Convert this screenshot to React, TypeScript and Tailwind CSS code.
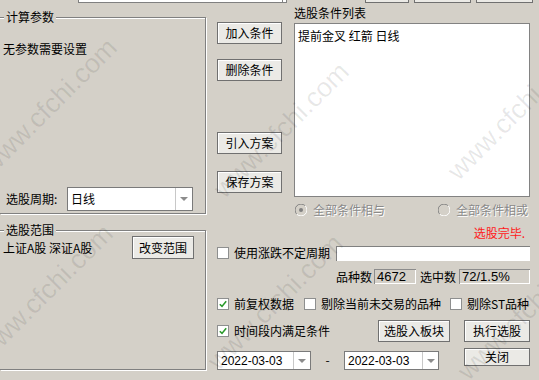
import React from "react";

const cjk = "font-['Noto_Sans_CJK_SC','Noto_Sans',sans-serif]";
const latin = "font-['Liberation_Sans',Arial,sans-serif]";

const Btn = ({ label, className = "" }: { label: string; className?: string }) => (
  <button
    type="button"
    className={`flex shrink-0 items-center justify-center border border-[#707070] bg-[#ebeae6] text-[12px] leading-[16px] text-black shadow-[inset_1px_1px_0_#fff] ${className}`}
  >
    {label}
  </button>
);

const Check = ({ checked = false }: { checked?: boolean }) => (
  <span className="flex h-[12px] w-[12px] shrink-0 items-center justify-center border border-[#8e8f8f] bg-white">
    {checked && (
      <svg width="8" height="8" viewBox="0 0 8 8">
        <path d="M0.8 4.2 L3 6.4 L7.2 1.2" stroke="#2a9a2a" strokeWidth="1.6" fill="none" />
      </svg>
    )}
  </span>
);

const Radio = ({ on = false }: { on?: boolean }) => (
  <svg width="12" height="12" viewBox="0 0 12 12" className="shrink-0">
    <path d="M10.2 1.8 A5.5 5.5 0 0 0 1.8 10.2" stroke="#808080" strokeWidth="1" fill="none" />
    <path d="M1.8 10.2 A5.5 5.5 0 0 0 10.2 1.8" stroke="#ffffff" strokeWidth="1" fill="none" />
    {on && <circle cx="6" cy="6" r="2" fill="#808080" />}
  </svg>
);

const Arrow = () => (
  <svg width="8" height="4" viewBox="0 0 8 4">
    <path d="M0 0 H8 L4 4 Z" fill="#8c8c8c" />
  </svg>
);

const Combo = ({ value, className = "", arrowW, textClass }: { value: string; className?: string; arrowW: string; textClass: string }) => (
  <div className={`flex shrink-0 border border-[#7a7a7a] bg-white ${className}`}>
    <span className={`flex flex-1 items-center pl-[3px] text-black ${textClass}`}>{value}</span>
    <span className={`flex items-center justify-center border-l border-[#c8c8c8] ${arrowW}`}>
      <Arrow />
    </span>
  </div>
);

const Group = ({ title, className = "", children }: { title: string; className?: string; children: React.ReactNode }) => (
  <div
    className={`relative flex w-[206px] flex-col border border-l-0 border-[#808080] shadow-[inset_0_1px_0_#fff,1px_1px_0_#fff] ${className}`}
  >
    <span className="absolute -top-[9px] left-[4px] bg-[#d4d0c8] px-[2px] text-[12px] leading-[16px]">{title}</span>
    {children}
  </div>
);

const Disabled = ({ children }: { children: React.ReactNode }) => (
  <span className="text-[12px] leading-[16px] text-[#8a8a8a] [text-shadow:1px_1px_0_#fff]">{children}</span>
);

// watermark spots (bottom-left of the rotated text)
const marks = [
  "left-[-4px] top-[152px]",
  "left-[-8px] top-[338px]",
  "left-[228px] top-[176px]",
  "left-[222px] top-[348px]",
  "left-[462px] top-[158px]",
  "left-[472px] top-[358px]",
];

export default function App() {
  return (
    <div className={`relative h-[380px] w-[539px] overflow-hidden bg-[#d4d0c8] text-[12px] text-black ${cjk}`}>
      {/* top strip */}
      <div className="flex h-[3px]">
        <div className="ml-[78px] h-[3px] w-[205px] border-x border-b border-[#808080] bg-white" />
        <div className="h-[3px] w-[4px] border-r border-b border-[#808080] bg-white" />
        <div className="ml-[78px] h-[3px] w-[44px] border-x border-b border-[#707070] bg-[#ebeae6]" />
        <div className="ml-[5px] h-[3px] w-[57px] border-x border-b border-[#707070] bg-[#ebeae6]" />
        <div className="ml-[5px] h-[3px] w-[57px] border-x border-b border-[#707070] bg-[#ebeae6]" />
      </div>

      <div className="flex">
        {/* left column */}
        <div className="flex w-[208px] shrink-0 flex-col">
          <Group title="计算参数" className="mt-[14px] h-[197px]">
            <div className="mt-[23px] pl-[3px] leading-[16px]">无参数需要设置</div>
            <div className="mt-auto mb-[2px] flex items-center">
              <span className="w-[67px] pl-[6px] leading-[16px]">选股周期:</span>
              <Combo value="日线" className="h-[24px] w-[126px]" arrowW="w-[17px]" textClass="text-[12px] leading-[16px]" />
            </div>
          </Group>
          <Group title="选股范围" className="mt-[16px] h-[140px]">
            <div className="mt-[5px] flex items-center pr-[11px]">
              <span className="pl-[3px] leading-[16px]">上证A股 深证A股</span>
              <Btn label="改变范围" className="ml-auto h-[23px] w-[62px]" />
            </div>
          </Group>
        </div>

        {/* right column */}
        <div className="flex flex-1 flex-col">
          <div className="flex">
            <div className="ml-[9px] flex w-[65px] flex-col">
              <Btn label="加入条件" className="mt-[19px] h-[22px] w-[65px]" />
              <Btn label="删除条件" className="mt-[15px] h-[22px] w-[65px]" />
              <Btn label="引入方案" className="mt-[51px] h-[22px] w-[65px]" />
              <Btn label="保存方案" className="mt-[17px] h-[22px] w-[65px]" />
            </div>
            <div className="ml-[12px] flex w-[236px] flex-col">
              <span className="mt-[2px] h-[16px] leading-[16px]">选股条件列表</span>
              <div className="mt-[2px] h-[174px] border border-[#828282] bg-white pt-[4px] pl-[3px] leading-[16px]">
                提前金叉 红箭 日线
              </div>
            </div>
          </div>

          <div className="mt-[5px] flex h-[16px] items-center pl-[87px] pr-[11px]">
            <Radio on />
            <span className="ml-[6px]"><Disabled>全部条件相与</Disabled></span>
            <span className="ml-auto"><Radio /></span>
            <span className="ml-[6px]"><Disabled>全部条件相或</Disabled></span>
          </div>

          <div className="mt-[7px] h-[16px] pr-[14px] text-right leading-[16px] text-[#ff1a1a]">选股完毕.</div>

          <div className="mt-[4px] flex h-[16px] items-center pl-[9px]">
            <Check />
            <span className="ml-[5px] leading-[16px]">使用涨跌不定周期</span>
            <div className="ml-[6px] h-[15px] w-[194px] border-t border-l border-[#808080] bg-white" />
          </div>

          <div className="mt-[8px] flex h-[15px] items-center pl-[128px]">
            <span className="leading-[16px]">品种数</span>
            <span className={`ml-[2px] flex h-[15px] w-[42px] items-center border-t border-l border-[#8c8c8c] pl-[2px] text-[13px] shadow-[inset_-1px_-1px_0_#fff] ${latin}`}>4672</span>
            <span className="ml-[4px] leading-[16px]">选中数</span>
            <span className={`ml-[3px] flex h-[15px] w-[71px] items-center border-t border-l border-[#8c8c8c] pl-[2px] text-[13px] shadow-[inset_-1px_-1px_0_#fff] ${latin}`}>72/1.5%</span>
          </div>

          <div className="mt-[12px] flex h-[16px] items-center pl-[9px]">
            <Check checked />
            <span className="ml-[5px] leading-[16px]">前复权数据</span>
            <span className="ml-[10px]"><Check /></span>
            <span className="ml-[5px] leading-[16px]">剔除当前未交易的品种</span>
            <span className="ml-[9px]"><Check /></span>
            <span className="ml-[5px] leading-[16px]">剔除ST品种</span>
          </div>

          <div className="mt-[8px] flex h-[22px] items-center pl-[9px]">
            <Check checked />
            <span className="ml-[5px] leading-[16px]">时间段内满足条件</span>
            <Btn label="选股入板块" className="ml-[48px] h-[22px] w-[72px]" />
            <Btn label="执行选股" className="ml-[14px] h-[22px] w-[66px]" />
          </div>

          <div className="mt-[6px] flex items-start pl-[9px]">
            <Combo value="2022-03-03" className="mt-[3px] h-[19px] w-[94px]" arrowW="w-[17px]" textClass={`text-[12px] ${latin}`} />
            <span className="mt-[4px] w-[33px] text-center leading-[16px]">-</span>
            <Combo value="2022-03-03" className="mt-[3px] h-[19px] w-[95px]" arrowW="w-[16px]" textClass={`text-[12px] ${latin}`} />
            <Btn label="关闭" className="ml-[25px] h-[18px] w-[66px]" />
          </div>
        </div>
      </div>

      {/* watermark */}
      {marks.map((m) => (
        <span
          key={m}
          className={`pointer-events-none absolute origin-bottom-left -rotate-45 whitespace-nowrap text-[27px] leading-[27px] text-black/[0.09] ${latin} ${m}`}
        >
          www.cfchi.com
        </span>
      ))}
    </div>
  );
}
